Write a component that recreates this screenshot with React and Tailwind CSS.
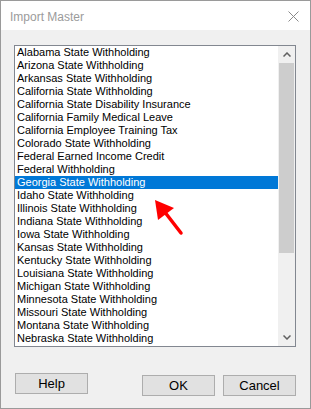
import React from "react";

const items = [
  "Alabama State Withholding",
  "Arizona State Withholding",
  "Arkansas State Withholding",
  "California State Withholding",
  "California State Disability Insurance",
  "California Family Medical Leave",
  "California Employee Training Tax",
  "Colorado State Withholding",
  "Federal Earned Income Credit",
  "Federal Withholding",
  "Georgia State Withholding",
  "Idaho State Withholding",
  "Illinois State Withholding",
  "Indiana State Withholding",
  "Iowa State Withholding",
  "Kansas State Withholding",
  "Kentucky State Withholding",
  "Louisiana State Withholding",
  "Michigan State Withholding",
  "Minnesota State Withholding",
  "Missouri State Withholding",
  "Montana State Withholding",
  "Nebraska State Withholding",
];

const selected = "Georgia State Withholding";

function Button({ children }) {
  return (
    <button className="w-[73px] h-[21px] bg-[#e1e1e1] border border-[#adadad] text-[13px] text-black leading-none">
      {children}
    </button>
  );
}

export default function App() {
  return (
    <div
      className="relative w-[311px] h-[409px] border border-[#9a9a9a] flex flex-col bg-[#f0f0f0]"
      style={{ fontFamily: '"Liberation Sans", Arial, sans-serif' }}
    >
      {/* Title bar */}
      <div className="h-[29px] bg-white flex items-center justify-between pl-[9px] pr-[11px] shrink-0">
        <span className="text-[12px] text-[#9b9b9b] pt-[2px]">Import Master</span>
        <svg width="11" height="11" viewBox="0 0 11 11" className="mt-[1px]">
          <path d="M0.5 0.5 L10.5 10.5 M10.5 0.5 L0.5 10.5" stroke="#8a8a8a" strokeWidth="1" />
        </svg>
      </div>

      {/* Body */}
      <div className="flex-1 flex flex-col pl-[13px] pt-[15px]">
        <div className="w-[282px] h-[302px] border border-[#828790] bg-white flex">
          <div className="flex-1 flex flex-col">
            {items.map((it) => (
              <div
                key={it}
                className={`h-[13px] leading-[13px] text-[11px] pl-[2px] whitespace-nowrap ${
                  it === selected ? "bg-[#0078d7] text-white" : "text-black"
                }`}
              >
                {it}
              </div>
            ))}
          </div>
          {/* Scrollbar */}
          <div className="w-[17px] bg-[#f0f0f0] flex flex-col">
            <div className="h-[17px] flex items-center justify-center">
              <svg width="8" height="5" viewBox="0 0 8 5">
                <path d="M0.5 4.5 L4 1 L7.5 4.5" fill="none" stroke="#606060" strokeWidth="1.5" />
              </svg>
            </div>
            <div className="h-[190px] bg-[#cdcdcd] mx-[1px]" />
            <div className="flex-1" />
            <div className="h-[17px] flex items-center justify-center">
              <svg width="8" height="5" viewBox="0 0 8 5">
                <path d="M0.5 0.5 L4 4 L7.5 0.5" fill="none" stroke="#606060" strokeWidth="1.5" />
              </svg>
            </div>
          </div>
        </div>

        <div className="flex mt-[26px] pl-[1px]">
          <Button>Help</Button>
          <div className="ml-[54px]">
            <Button>OK</Button>
          </div>
          <div className="ml-[8px]">
            <Button>Cancel</Button>
          </div>
        </div>
      </div>

      {/* Red annotation arrow */}
      <svg
        className="absolute left-[150px] top-[195px]"
        width="36"
        height="42"
        viewBox="0 0 36 42"
      >
        <path d="M4 4 L23 12 L7 24 Z" fill="#ff0000" />
        <path d="M13 15 L30 37" stroke="#ff0000" strokeWidth="3.5" strokeLinecap="round" />
      </svg>
    </div>
  );
}
